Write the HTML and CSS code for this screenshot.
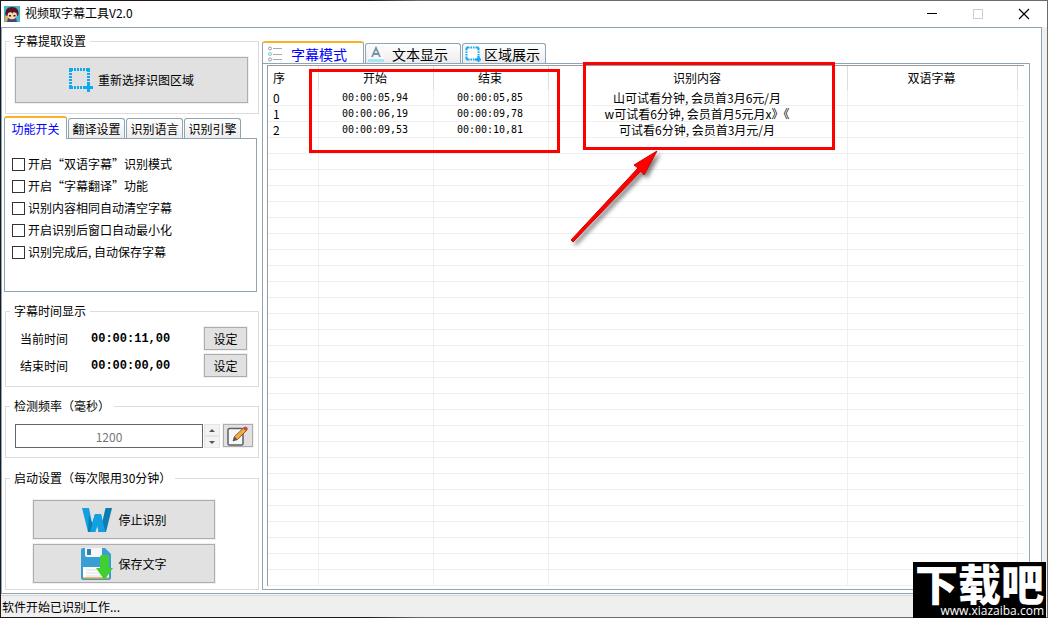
FILE: index.html
```html
<!DOCTYPE html>
<html lang="zh-CN">
<head>
    <meta charset="UTF-8">
    <meta name="viewport" content="width=device-width, initial-scale=1.0">
    <title>视频取字幕工具V2.0</title>
    <link rel="stylesheet" href="styles.css">
</head>
<body>
    <header class="title-bar">
        <svg class="app-icon" width="16" height="16" viewBox="0 0 16 16">
            <rect width="16" height="16" fill="#4db6c8"/>
            <rect x="1" y="10" width="5" height="5" fill="#e9b13c"/>
            <path d="M4 12h8l1 4H3z" fill="#3b4a78"/>
            <circle cx="8" cy="8.500" r="5" fill="#f8d3b8"/>
            <path d="M1.500 9C1 4 3 1 8 1s7 3 6.500 8l-1.500 1-.5-3-3-1-1 1.500-1.500-1.500-3 1-.5 3z" fill="#5a1420"/>
            <path d="M5 9h2v1.500H5zM9.500 9h2v1.500h-2z" fill="#3a1b1b"/>
            <path d="M7 13h2v1H7z" fill="#d8343c"/>
        </svg>
        <h1 class="title-text">视频取字幕工具V2.0</h1>
        <div class="window-buttons">
            <button type="button" aria-label="最小化"><svg width="12" height="12" viewBox="0 0 12 12"><path d="M1 5.500h10" stroke="#000"/></svg></button>
            <button type="button" aria-label="最大化" disabled><svg width="12" height="12" viewBox="0 0 12 12"><path d="M1.500 1.500h9v9h-9z" stroke="#ccc" fill="none"/></svg></button>
            <button type="button" aria-label="关闭"><svg width="12" height="12" viewBox="0 0 12 12"><path d="M1 1l10 10M11 1L1 11" stroke="#000" stroke-width="1.200"/></svg></button>
        </div>
    </header>

    <div class="client">
        <div class="window-body">
            <aside class="sidebar">
                <fieldset class="group group-region">
                    <legend>字幕提取设置</legend>
                    <button type="button" class="btn btn-region">
                        <svg width="24" height="24" viewBox="0 0 24 24">
                            <g fill="none" stroke="#11a9ee" stroke-width="3">
                                <path d="M0 1.500h21" stroke-dasharray="4 1 2 1 2 1 2 1 2 1 4"/>
                                <path d="M1.500 3v18" stroke-dasharray="1 1 2 1 2 1 2 1 2 1 4"/>
                                <path d="M19.500 3v13" stroke-dasharray="1 1 2 1 2 1 2 1 2"/>
                                <path d="M3 19.500h12" stroke-dasharray="1 1 2 1 2 1 2 1 1"/>
                                <path d="M15 19.500h9M19.500 15v9"/>
                            </g>
                        </svg>
                        重新选择识图区域
                    </button>
                </fieldset>

                <div class="tabs tabs-small" role="tablist">
                    <button type="button" class="tab active" role="tab" aria-selected="true">功能开关</button>
                    <button type="button" class="tab" role="tab">翻译设置</button>
                    <button type="button" class="tab" role="tab">识别语言</button>
                    <button type="button" class="tab" role="tab">识别引擎</button>
                </div>
                <div class="switches">
                    <label><input type="checkbox">开启“双语字幕”识别模式</label>
                    <label><input type="checkbox">开启“字幕翻译”功能</label>
                    <label><input type="checkbox">识别内容相同自动清空字幕</label>
                    <label><input type="checkbox">开启识别后窗口自动最小化</label>
                    <label><input type="checkbox">识别完成后, 自动保存字幕</label>
                </div>

                <fieldset class="group group-time">
                    <legend>字幕时间显示</legend>
                    <span>当前时间</span><output class="clock">00:00:11,00</output><button type="button" class="btn">设定</button>
                    <span>结束时间</span><output class="clock">00:00:00,00</output><button type="button" class="btn">设定</button>
                </fieldset>

                <fieldset class="group group-rate">
                    <legend>检测频率（毫秒）</legend>
                    <input type="number" id="rate" value="1200" aria-label="检测频率（毫秒）" disabled>
                    <div class="spinner">
                        <button type="button" aria-label="增加"><svg width="6" height="3" viewBox="0 0 6 3"><path d="M0 3l3-3 3 3z" fill="#555"/></svg></button>
                        <button type="button" aria-label="减少"><svg width="6" height="3" viewBox="0 0 6 3"><path d="M0 0l3 3 3-3z" fill="#555"/></svg></button>
                    </div>
                    <button type="button" class="btn btn-edit" aria-label="编辑">
                        <svg width="22" height="20" viewBox="0 0 22 20">
                            <rect x="1" y="2.500" width="15" height="16.500" rx="1.500" fill="#f7f7f7" stroke="#5b6067" stroke-width="1.500"/>
                            <path d="M6 15l1.500-4.500L17 1.500l3 2.500-9.500 9.500z" fill="#f3ab3a" stroke="#6b4a2a" stroke-width=".8"/>
                            <path d="M16 2.500L18 .5q2.500 0 3 2.500l-2 2z" fill="#cf4444"/>
                            <path d="M6 15l1.500-4.500 3 3z" fill="#555"/>
                        </svg>
                    </button>
                </fieldset>

                <fieldset class="group group-start">
                    <legend>启动设置（每次限用30分钟）</legend>
                    <button type="button" class="btn">
                        <svg width="32" height="32" viewBox="0 0 32 32">
                            <path d="M1 4h7l3 15 3-9h6l-5.500 18H7z" fill="#12a0e0"/>
                            <path d="M14 10h6l4 18h-6.500z" fill="#12a0e0"/>
                            <path d="M24.500 4H31l-6 24h-5.500l-2-8 4-3z" fill="#0a7db2"/>
                            <path d="M8 11l3 8 1 4-2.500 5H7z" fill="#0a7db2"/>
                            <path d="M14 10h6l2 9 2.500 9h-7L16 18l-3 10H9z" fill="#12a0e0"/>
                        </svg>
                        停止识别
                    </button>
                    <button type="button" class="btn">
                        <svg width="32" height="32" viewBox="0 0 32 32">
                            <path d="M2 0h22l6 6v24q0 2-2 2H2q-2 0-2-2V2q0-2 2-2z" fill="#389fd6"/>
                            <path d="M4 0h17v7q0 2-2 2H6q-2 0-2-2z" fill="#f4f6f8"/>
                            <rect x="6" y="1" width="4" height="6" fill="#2b7fb4"/>
                            <path d="M2 19h26v11H2z" fill="#fff"/>
                            <path d="M5 22h15M5 25h15M5 28h15" stroke="#d9dde0"/>
                            <path d="M2 30h26" stroke="#f2a32c" stroke-width="1.500"/>
                            <path d="M19 9q0-2 2-2h5q2 0 2 2v11h4l-8.500 12L15 20h4z" fill="#3fd02f"/>
                        </svg>
                        保存文字
                    </button>
                </fieldset>
            </aside>

            <main class="content">
                <div class="tabs tabs-large" role="tablist">
                    <button type="button" class="tab active" role="tab" aria-selected="true">
                        <svg width="16" height="16" viewBox="0 0 16 16" fill="none">
                            <path d="M6 2.500h9M6 8.500h9M6 13.500h9" stroke="#aaa"/>
                            <circle cx="3" cy="2.500" r="1.500" stroke="#999"/>
                            <circle cx="3" cy="8" r="1.500" stroke="#7cc5e6"/>
                            <circle cx="3" cy="13.500" r="1.500" stroke="#999"/>
                        </svg>
                        字幕模式
                    </button>
                    <button type="button" class="tab" role="tab">
                        <svg width="16" height="16" viewBox="0 0 16 16">
                            <rect width="16" height="16" fill="#f8f8f8"/>
                            <path d="M4 11L8 2l4 9M5.500 8h5" fill="none" stroke="#7393a7" stroke-width="1.800"/>
                            <rect y="13" width="16" height="3" fill="#a8e4f5"/>
                        </svg>
                        文本显示
                    </button>
                    <button type="button" class="tab" role="tab">
                        <svg width="16" height="16" viewBox="0 0 16 16">
                            <rect x="1.500" y="1.500" width="12" height="12" fill="#fff" stroke="#11a9ee" stroke-width="2" stroke-dasharray="3 1 1.500 1 1.500 1 3 0"/>
                            <path d="M10 13.500h6M13.500 10v6" stroke="#11a9ee" stroke-width="2"/>
                        </svg>
                        区域展示
                    </button>
                </div>
                <div class="panel">
                    <table class="subtitle-list">
                        <colgroup>
                            <col class="col-index">
                            <col class="col-time">
                            <col class="col-time">
                            <col>
                            <col class="col-bilingual">
                            <col class="col-rest">
                        </colgroup>
                        <thead>
                            <tr><th>序</th><th>开始</th><th>结束</th><th>识别内容</th><th>双语字幕</th><th></th></tr>
                        </thead>
                        <tbody id="subtitle-rows">
                            <tr><td>0</td><td class="time">00:00:05,94</td><td class="time">00:00:05,85</td><td>山可试看分钟, 会员首3月6元/月</td><td></td><td></td></tr>
                            <tr><td>1</td><td class="time">00:00:06,19</td><td class="time">00:00:09,78</td><td>w可试看6分钟, 会员首月5元月x》《</td><td></td><td></td></tr>
                            <tr><td>2</td><td class="time">00:00:09,53</td><td class="time">00:00:10,81</td><td>可试看6分钟, 会员首3月元/月</td><td></td><td></td></tr>
                        </tbody>
                    </table>
                    <div class="mark mark-time"></div>
                    <div class="mark mark-text"></div>
                    <svg class="arrow" width="100" height="104" viewBox="0 0 100 104">
                        <path d="M6 92L73 20 69 17 92 3 79 27 76 23 8 94z" fill="#f00" stroke="#d80000" stroke-width="1" stroke-linejoin="round"/>
                    </svg>
                </div>
            </main>
        </div>
        <footer class="status-bar">软件开始已识别工作...</footer>
    </div>

    <div class="watermark">
        <strong>下载吧</strong>
        <span>www.xiazaiba.com</span>
    </div>

    <script>
        // Fill the list with empty grid rows
        const rows = document.getElementById('subtitle-rows');
        while (rows.rows.length < 31) {
            const row = rows.insertRow();
            for (let i = 0; i < 6; i++) {
                row.insertCell();
            }
        }
    </script>
</body>
</html>
```
FILE: styles.css
```css
* {
    box-sizing: border-box;
}

body {
    margin: 0;
    padding: 1px;
    min-height: 100vh;
    display: flex;
    flex-direction: column;
    position: relative;
    background: linear-gradient(90deg, #1d191c 35%, #6e6a66 40%);
    color: #000;
    font-family: "Noto Sans CJK SC", "Noto Sans", sans-serif;
    font-size: 12px;
    line-height: 16px;
}

button, input {
    font: inherit;
    color: inherit;
    margin: 0;
    padding: 0;
}

button {
    display: flex;
    align-items: center;
    justify-content: center;
    white-space: nowrap;
}

svg {
    display: block;
    flex: none;
}

/* Title bar */
.title-bar {
    display: flex;
    align-items: center;
    height: 26px;
    padding-left: 3px;
    background: #fff;
}

.title-text {
    flex: 1;
    margin: 0 0 2px 5px;
    font-size: 12px;
    font-weight: 400;
}

.window-buttons {
    display: flex;
}

.window-buttons button {
    width: 46px;
    height: 24px;
    border: none;
    background: none;
}

.client {
    flex: 1;
    display: flex;
    flex-direction: column;
    background: #efefef;
}

.window-body {
    flex: 1;
    display: flex;
    gap: 3px;
    margin-right: 5px;
    padding: 5px 11px 3px 3px;
    border: 1px solid #8ea5b3;
    background: #fff;
}

.status-bar {
    height: 23px;
    padding: 4px 1px 0;
    border-top: 1px solid #f7f7f7;
    box-shadow: inset 0 1px #dcd4d0;
}

/* Sidebar groups */
.sidebar {
    flex: none;
    width: 254px;
}

.group {
    --indent: 9px;
    margin: 11px 0 0;
    border: 1px solid #dcdcdc;
    min-width: 0;
}

.group legend {
    margin-left: calc(4px - var(--indent));
    padding: 0 4px;
}

.group-region {
    margin-top: 0;
    padding: 8px 10px 10px var(--indent);
}

.btn {
    border: 1px solid #adadad;
    background: #e1e1e1;
    outline: 1px solid #f0f0f0;
}

.btn-region {
    width: 100%;
    height: 46px;
    gap: 5px;
}

.group-time {
    --indent: 14px;
    display: grid;
    grid-template-columns: 71px 1fr 43px;
    gap: 4px 0;
    align-items: center;
    padding: 8px 11px 9px var(--indent);
}

.group-time .btn {
    height: 23px;
}

.clock {
    font-family: "Liberation Mono", monospace;
    font-weight: 700;
}

.group-rate {
    display: flex;
    padding: 10px 5px 9px var(--indent);
}

.group-rate input {
    flex: 1;
    min-width: 0;
    height: 24px;
    border: 1px solid #666;
    background: #fff;
    color: #777;
    text-align: center;
    appearance: textfield;
}

.group-rate input::-webkit-inner-spin-button {
    display: none;
}

.spinner {
    display: flex;
    flex-direction: column;
    width: 16px;
    margin: 0 3px 0 1px;
}

.spinner button {
    flex: 1;
    border: 1px solid #e4e4e4;
    background: #f3f3f3;
}

.btn-edit {
    width: 30px;
    height: 23px;
}

.group-start {
    --indent: 27px;
    display: flex;
    flex-direction: column;
    gap: 5px;
    margin-top: 12px;
    padding: 14px 43px 6px var(--indent);
}

.group-start .btn {
    height: 39px;
    gap: 5px;
}

/* Tabs */
.tabs {
    display: flex;
    align-items: flex-end;
}

.tab {
    border: 1px solid #8ea5b3;
    border-bottom: none;
    border-radius: 3px 3px 0 0;
    background: linear-gradient(#fff, #ececec);
}

.tab.active {
    position: relative;
    margin-bottom: -1px;
    border-top: 2px solid #fab127;
    background: #fff;
    color: #00f;
}

.tabs-small {
    gap: 1px;
    margin: 2px 0 0 -1px;
}

.tabs-small .tab {
    width: 57px;
    height: 20px;
}

.tabs-small .tab.active {
    width: 63px;
    height: 23px;
}

.switches {
    display: flex;
    flex-direction: column;
    gap: 6px;
    height: 154px;
    margin: 0 2px 0 -1px;
    padding: 17px 7px;
    border: 1px solid #8ea5b3;
}

.switches label {
    display: flex;
    align-items: center;
    gap: 3px;
}

.switches input {
    appearance: none;
    width: 13px;
    height: 13px;
    border: 1px solid #333;
    background: #fff;
}

.switches input:checked {
    background: #333;
}

/* Subtitle list */
.content {
    flex: 1;
    min-width: 0;
    display: flex;
    flex-direction: column;
    padding-top: 8px;
}

.tabs-large {
    gap: 1px;
}

.tabs-large .tab {
    justify-content: flex-start;
    width: 96px;
    height: 20px;
    padding: 0 2px;
    gap: 8px;
    font-size: 14px;
}

.tabs-large .tab.active {
    width: 102px;
    height: 23px;
    padding: 0 4px;
}

.tabs-large .tab:last-child {
    width: 84px;
    gap: 3px;
}

.panel {
    flex: 1;
    position: relative;
    padding: 1px 5px 3px 4px;
    border: 1px solid #8ea5b3;
}

.subtitle-list {
    width: 100%;
    table-layout: fixed;
    border: 1px solid #9a9a9a;
    border-width: 1px 0 0 1px;
    border-spacing: 0;
    text-align: center;
}

.col-index {
    width: 51px;
}

.col-time {
    width: 115px;
}

.col-bilingual {
    width: 170px;
}

.col-rest {
    width: 6px;
}

.subtitle-list th {
    height: 24px;
    padding: 0 2px 0 0;
    border-right: 1px solid #dedede;
    font-weight: 400;
}

.subtitle-list td {
    height: 16px;
    padding: 0 2px 0 0;
    border-right: 1px solid #efefef;
    border-bottom: 1px solid #efefef;
    line-height: 15px;
    white-space: nowrap;
}

.subtitle-list th:first-child, .subtitle-list td:first-child {
    padding-left: 5px;
    text-align: left;
}

.subtitle-list th:last-child, .subtitle-list td:last-child {
    border-right: none;
}

.subtitle-list .time {
    font-family: "DejaVu Sans Mono", monospace;
    font-size: 10px;
}

/* Red marks over the list */
.mark {
    position: absolute;
    border: 3px solid #f00;
}

.mark-time {
    left: 46px;
    top: 5px;
    width: 251px;
    height: 84px;
}

.mark-text {
    left: 320px;
    top: -2px;
    width: 252px;
    height: 88px;
}

.arrow {
    position: absolute;
    left: 302px;
    top: 84px;
    filter: drop-shadow(3px 3px 2px rgba(0, 0, 0, 0.5));
}

.watermark {
    position: absolute;
    right: 2px;
    bottom: 0;
    width: 133px;
    height: 56px;
    background: #000;
    color: #fff;
    text-align: right;
    white-space: nowrap;
}

.watermark strong {
    display: block;
    padding-right: 2px;
    font-size: 43px;
    font-weight: 900;
    line-height: 40px;
}

.watermark span {
    display: block;
    padding-right: 2px;
    font-family: "Open Sans", sans-serif;
    font-size: 12px;
    line-height: 18px;
}
```
